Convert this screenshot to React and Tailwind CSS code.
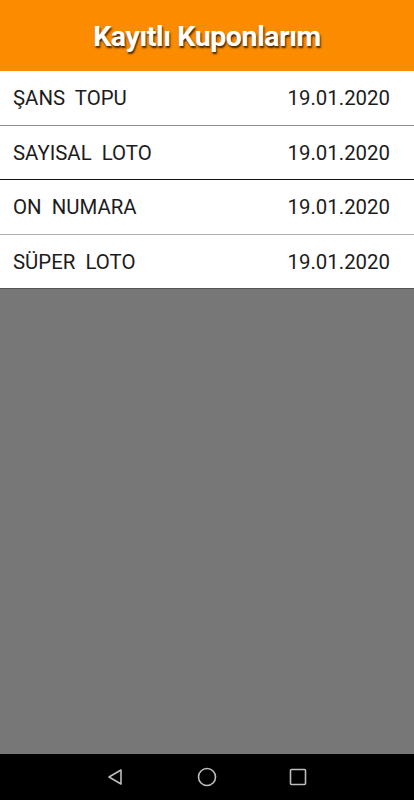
import React from "react";

const rows = [
  { name: "ŞANS  TOPU", border: "border-[#8f8f8f]" },
  { name: "SAYISAL  LOTO", border: "border-[#111111]" },
  { name: "ON  NUMARA", border: "border-[#b0b0b0]" },
  { name: "SÜPER  LOTO", border: "border-[#555555]" },
];

export default function App() {
  return (
    <div
      className="w-[414px] h-[800px] flex flex-col bg-[#777777]"
      style={{ fontFamily: "Roboto, 'Liberation Sans', sans-serif" }}
    >
      <div className="h-[71px] bg-[#fb8c00] flex items-center justify-center shrink-0 pt-[4px]">
        <span className="text-white font-bold text-[28.5px] tracking-[-0.4px] [text-shadow:1px_2px_2px_rgba(0,0,0,0.75)]">
          Kayıtlı Kuponlarım
        </span>
      </div>
      <div className="flex flex-col shrink-0">
        {rows.map((r) => (
          <div
            key={r.name}
            className={`h-[54.5px] bg-white flex items-center justify-between pl-[13px] pr-[24px] pt-[2px] border-b ${r.border} text-[#1c1c1c] text-[20.4px]`}
          >
            <span className="whitespace-pre">{r.name}</span>
            <span>19.01.2020</span>
          </div>
        ))}
      </div>
      <div className="flex-1" />
      <div className="h-[46px] bg-black flex items-center justify-between shrink-0 pl-[106px] pr-[107px]">
        <svg width="18" height="18" viewBox="0 0 18 18" fill="none" stroke="#bdbdbd" strokeWidth="1.6" strokeLinejoin="round">
          <path d="M15 2 L3 9 L15 16 Z" />
        </svg>
        <svg width="20" height="20" viewBox="0 0 20 20" fill="none" stroke="#bdbdbd" strokeWidth="1.6">
          <circle cx="10" cy="10" r="8.5" />
        </svg>
        <svg width="18" height="18" viewBox="0 0 18 18" fill="none" stroke="#bdbdbd" strokeWidth="1.6">
          <rect x="1.5" y="1.5" width="15" height="15" rx="1" />
        </svg>
      </div>
    </div>
  );
}
